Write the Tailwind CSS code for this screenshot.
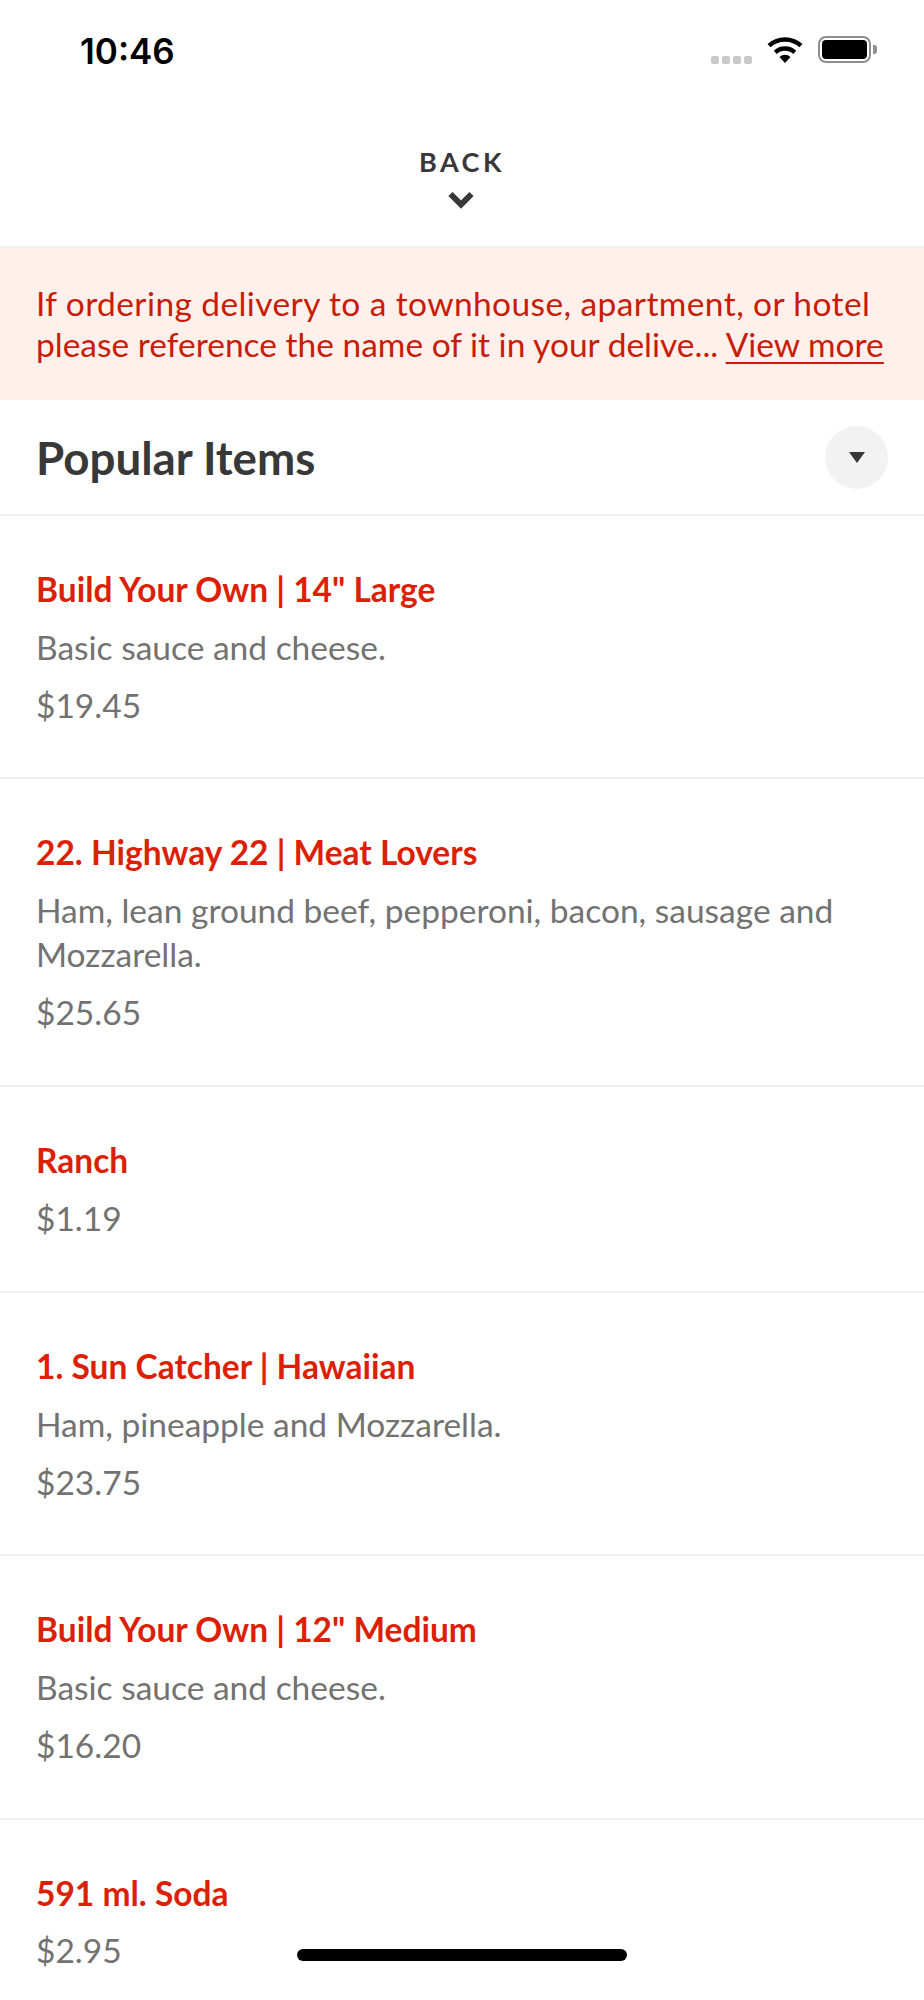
<!DOCTYPE html>
<html>
<head>
<meta charset="utf-8">
<script src="https://cdn.jsdelivr.net/npm/@tailwindcss/browser@4"></script>
</head>
<body class="bg-white font-['Lato',sans-serif]">
<div class="relative w-[924px] h-[2000px] overflow-hidden bg-white">
  <div class="h-[98px] pl-[80px] pr-[47px] pt-[30px] flex justify-between items-start">
    <span class="font-['Inter',sans-serif] font-semibold text-[35px] leading-[42px] text-black">10:46</span>
    <div class="flex items-start gap-[15px] mt-[6px]">
      <div class="flex gap-[3px] mt-[20px]">
        <span class="w-[8px] h-[8px] rounded-[2px] bg-[#c9c9c9]"></span>
        <span class="w-[8px] h-[8px] rounded-[2px] bg-[#c9c9c9]"></span>
        <span class="w-[8px] h-[8px] rounded-[2px] bg-[#c9c9c9]"></span>
        <span class="w-[8px] h-[8px] rounded-[2px] bg-[#c9c9c9]"></span>
      </div>
      <svg class="mt-[1px]" width="36" height="26" viewBox="0 0 36 26"><path d="M18 26l-5.500-6a8 8 0 0 1 11 0zM9.800 17l-3-3.300a16.500 16.500 0 0 1 22.400 0l-3 3.300a12 12 0 0 0-16.400 0zM3.600 10.300L.5 7a26 26 0 0 1 35 0l-3.100 3.300a21.500 21.500 0 0 0-28.800 0z" fill="#000"/></svg>
      <div class="flex items-center">
        <div class="w-[53px] h-[27px] rounded-[8px] border-2 border-[#8e8e8e] p-[2px]"><div class="w-full h-full rounded-[4px] bg-black"></div></div>
        <div class="w-[4px] h-[9px] ml-[2px] rounded-r-[3px] bg-[#8e8e8e]"></div>
      </div>
    </div>
  </div>
  <div class="h-[150px] flex flex-col items-center pt-[49px] border-b-2 border-[#f0f0f0]">
    <span class="font-bold text-[27px] leading-[30px] tracking-[3.500px] text-[#383838]">BACK</span>
    <svg class="mt-[14px] mr-[3px]" width="26" height="18" viewBox="0 0 26 18"><path d="M2.500 3L13 13.500 23.500 3" fill="none" stroke="#383838" stroke-width="6"/></svg>
  </div>
  <div class="h-[152px] bg-[#fff0ec] px-[36px] pt-[35px] text-[#c91c06] text-[33.500px] leading-[41px] whitespace-nowrap">
    <span class="tracking-[0.400px]">If ordering delivery to a townhouse, apartment, or hotel</span><br>please reference the name of it in your delive... <span class="underline underline-offset-[5px] decoration-2">View more</span>
  </div>
  <div class="h-[116px] px-[36px] flex items-center justify-between border-b-2 border-[#f0f0f0]">
    <span class="font-bold text-[45.700px] leading-[60px] mt-[2px] text-[#383838]">Popular Items</span>
    <div class="w-[63px] h-[63px] rounded-full bg-[#f2f2f2] flex items-center justify-center">
      <svg width="16" height="11" viewBox="0 0 16 11"><path d="M0 0h16L8 11z" fill="#383838"/></svg>
    </div>
  </div>
  <div class="px-[36px] pt-[53px] h-[263px] border-b-2 border-[#f0f0f0]">
    <h3 class="font-bold text-[33.500px] leading-[40px] text-[#dc1f05]">Build Your Own | 14" Large</h3>
    <p class="mt-[16px] text-[33.500px] leading-[44px] text-[#727272]">Basic sauce and cheese.</p>
    <p class="mt-[14px] text-[33.500px] leading-[44px] text-[#727272]">$19.45</p>
  </div>
  <div class="px-[36px] pt-[53px] h-[308px] border-b-2 border-[#f0f0f0]">
    <h3 class="font-bold text-[33.500px] leading-[40px] text-[#dc1f05]">22. Highway 22 | Meat Lovers</h3>
    <p class="mt-[16px] text-[33.500px] leading-[44px] text-[#727272]">Ham, lean ground beef, pepperoni, bacon, sausage and Mozzarella.</p>
    <p class="mt-[14px] text-[33.500px] leading-[44px] text-[#727272]">$25.65</p>
  </div>
  <div class="px-[36px] pt-[53px] h-[206px] border-b-2 border-[#f0f0f0]">
    <h3 class="font-bold text-[33.500px] leading-[40px] text-[#dc1f05]">Ranch</h3>
    <p class="mt-[16px] text-[33.500px] leading-[44px] text-[#727272]">$1.19</p>
  </div>
  <div class="px-[36px] pt-[53px] h-[263px] border-b-2 border-[#f0f0f0]">
    <h3 class="font-bold text-[33.500px] leading-[40px] text-[#dc1f05]">1. Sun Catcher | Hawaiian</h3>
    <p class="mt-[16px] text-[33.500px] leading-[44px] text-[#727272]">Ham, pineapple and Mozzarella.</p>
    <p class="mt-[14px] text-[33.500px] leading-[44px] text-[#727272]">$23.75</p>
  </div>
  <div class="px-[36px] pt-[53px] h-[264px] border-b-2 border-[#f0f0f0]">
    <h3 class="font-bold text-[33.500px] leading-[40px] text-[#dc1f05]">Build Your Own | 12" Medium</h3>
    <p class="mt-[16px] text-[33.500px] leading-[44px] text-[#727272]">Basic sauce and cheese.</p>
    <p class="mt-[14px] text-[33.500px] leading-[44px] text-[#727272]">$16.20</p>
  </div>
  <div class="px-[36px] pt-[53px]">
    <h3 class="font-bold text-[33.500px] leading-[40px] text-[#dc1f05]">591 ml. Soda</h3>
    <p class="mt-[15px] text-[33.500px] leading-[44px] text-[#727272]">$2.95</p>
  </div>
  <div class="absolute left-[297px] top-[1949px] w-[330px] h-[12px] rounded-full bg-black"></div>
</div>
</body>
</html>
